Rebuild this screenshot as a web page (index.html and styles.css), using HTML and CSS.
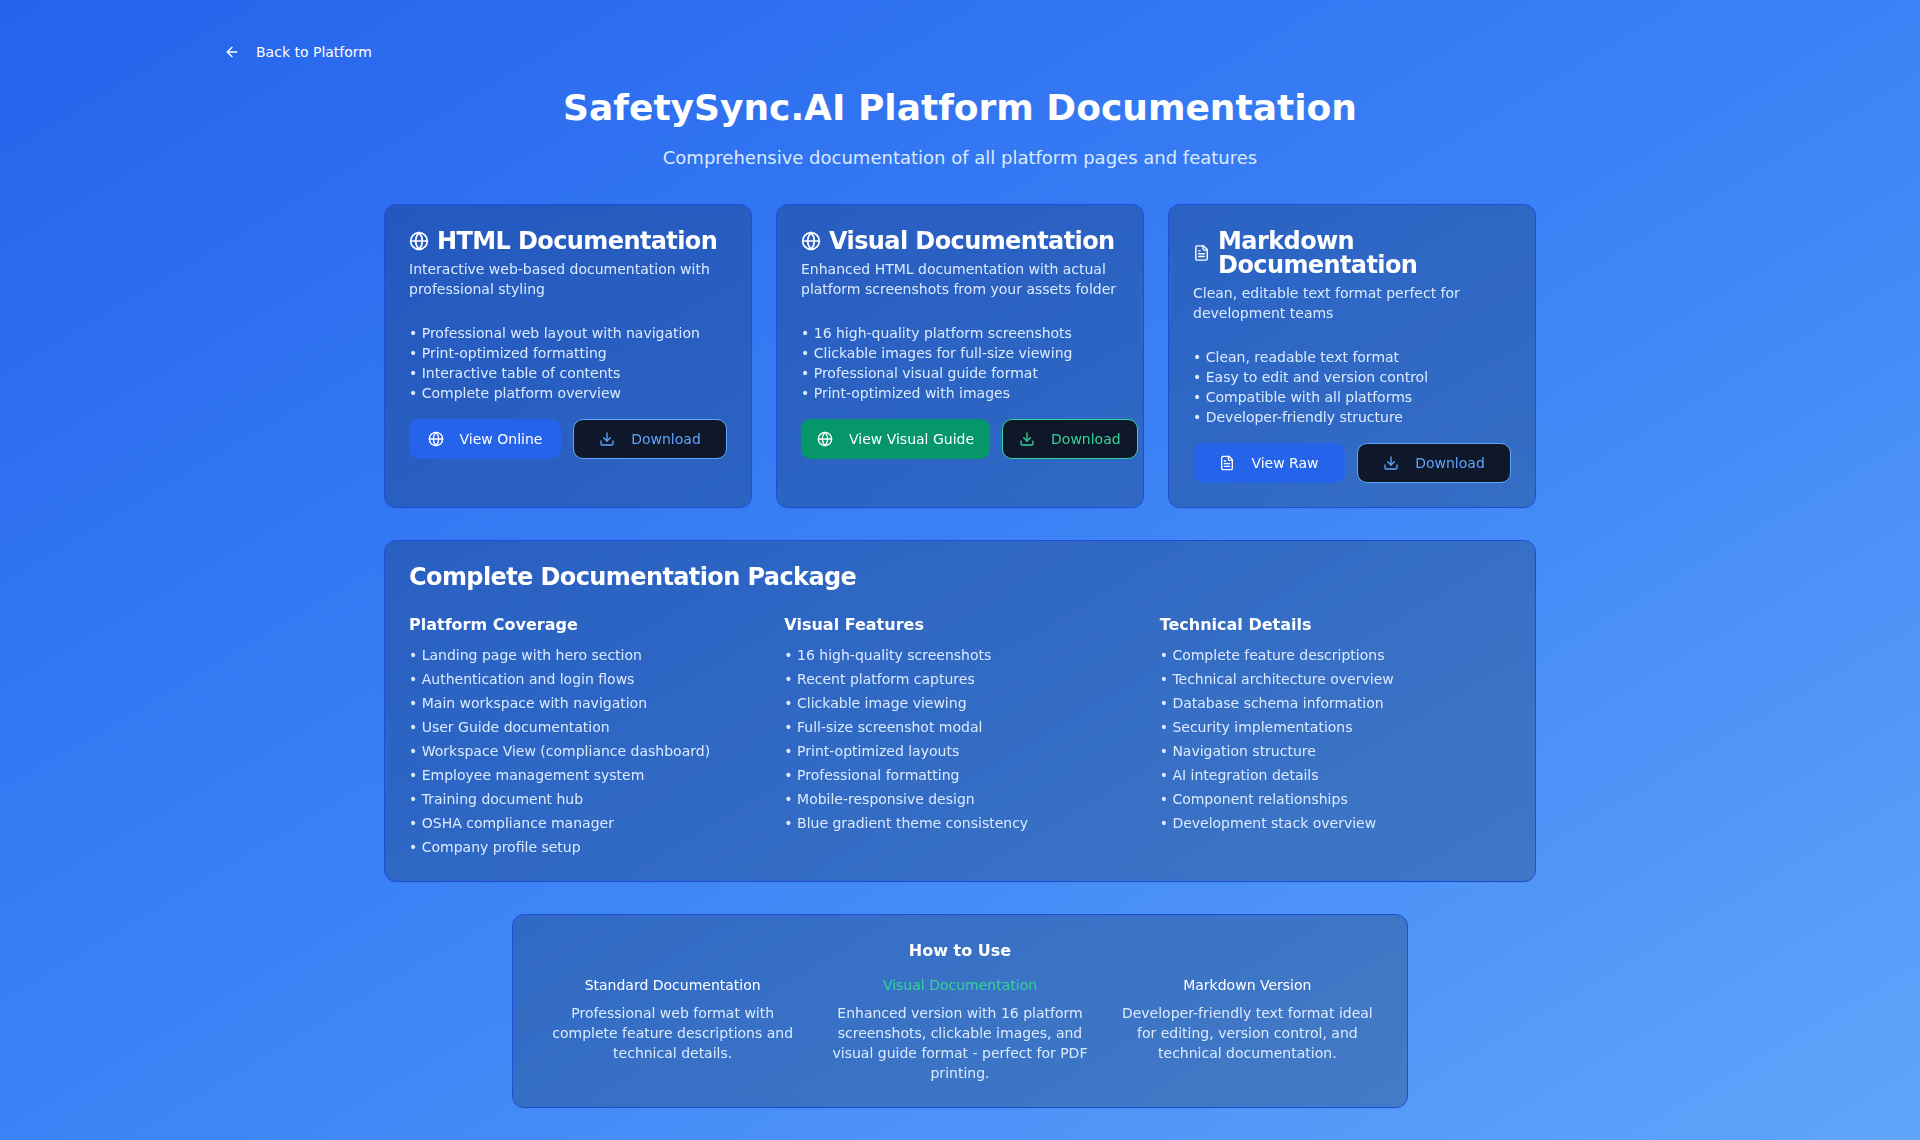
FILE: index.html
```html
<!DOCTYPE html>
<html lang="en">
<head>
<meta charset="utf-8">
<meta name="viewport" content="width=device-width, initial-scale=1">
<title>SafetySync.AI Platform Documentation</title>
<link rel="stylesheet" href="styles.css">
</head>
<body>
<svg class="sprite" aria-hidden="true">
  <symbol id="globe" viewBox="0 0 24 24"><circle cx="12" cy="12" r="10"/><path d="M12 2a14.5 14.5 0 0 0 0 20 14.5 14.5 0 0 0 0-20"/><path d="M2 12h20"/></symbol>
  <symbol id="download" viewBox="0 0 24 24"><path d="M21 15v4a2 2 0 0 1-2 2H5a2 2 0 0 1-2-2v-4"/><path d="m7 10 5 5 5-5"/><path d="M12 15V3"/></symbol>
  <symbol id="file-text" viewBox="0 0 24 24"><path d="M15 2H6a2 2 0 0 0-2 2v16a2 2 0 0 0 2 2h12a2 2 0 0 0 2-2V7Z"/><path d="M14 2v4a2 2 0 0 0 2 2h4"/><path d="M10 9H8"/><path d="M16 13H8"/><path d="M16 17H8"/></symbol>
  <symbol id="arrow-left" viewBox="0 0 24 24"><path d="m12 19-7-7 7-7"/><path d="M19 12H5"/></symbol>
</svg>
<main class="page">
  <nav class="back">
    <a class="btn btn-ghost" href="#"><svg class="icon" aria-hidden="true"><use href="#arrow-left"/></svg>Back to Platform</a>
  </nav>
  <header class="hero">
    <h1>SafetySync.AI Platform Documentation</h1>
    <p>Comprehensive documentation of all platform pages and features</p>
  </header>

  <section class="formats">
    <article class="card">
      <h2 class="card-title"><svg class="icon-lg" aria-hidden="true"><use href="#globe"/></svg>HTML Documentation</h2>
      <p class="card-text">Interactive web-based documentation with professional styling</p>
      <ul class="list">
        <li>Professional web layout with navigation</li>
        <li>Print-optimized formatting</li>
        <li>Interactive table of contents</li>
        <li>Complete platform overview</li>
      </ul>
      <div class="actions">
        <button class="btn btn-blue" type="button"><svg class="icon" aria-hidden="true"><use href="#globe"/></svg>View Online</button>
        <button class="btn btn-outline" type="button"><svg class="icon" aria-hidden="true"><use href="#download"/></svg>Download</button>
      </div>
    </article>
    <article class="card">
      <h2 class="card-title"><svg class="icon-lg" aria-hidden="true"><use href="#globe"/></svg>Visual Documentation</h2>
      <p class="card-text">Enhanced HTML documentation with actual platform screenshots from your assets folder</p>
      <ul class="list">
        <li>16 high-quality platform screenshots</li>
        <li>Clickable images for full-size viewing</li>
        <li>Professional visual guide format</li>
        <li>Print-optimized with images</li>
      </ul>
      <div class="actions">
        <button class="btn btn-green" type="button"><svg class="icon" aria-hidden="true"><use href="#globe"/></svg>View Visual Guide</button>
        <button class="btn btn-outline btn-outline-green" type="button"><svg class="icon" aria-hidden="true"><use href="#download"/></svg>Download</button>
      </div>
    </article>
    <article class="card">
      <h2 class="card-title"><svg class="icon-lg" aria-hidden="true"><use href="#file-text"/></svg>Markdown Documentation</h2>
      <p class="card-text">Clean, editable text format perfect for development teams</p>
      <ul class="list">
        <li>Clean, readable text format</li>
        <li>Easy to edit and version control</li>
        <li>Compatible with all platforms</li>
        <li>Developer-friendly structure</li>
      </ul>
      <div class="actions">
        <button class="btn btn-blue" type="button"><svg class="icon" aria-hidden="true"><use href="#file-text"/></svg>View Raw</button>
        <button class="btn btn-outline" type="button"><svg class="icon" aria-hidden="true"><use href="#download"/></svg>Download</button>
      </div>
    </article>
  </section>

  <section class="card package">
    <h2 class="card-title">Complete Documentation Package</h2>
    <div class="columns">
      <div>
        <h3>Platform Coverage</h3>
        <ul class="list list-spaced">
          <li>Landing page with hero section</li>
          <li>Authentication and login flows</li>
          <li>Main workspace with navigation</li>
          <li>User Guide documentation</li>
          <li>Workspace View (compliance dashboard)</li>
          <li>Employee management system</li>
          <li>Training document hub</li>
          <li>OSHA compliance manager</li>
          <li>Company profile setup</li>
        </ul>
      </div>
      <div>
        <h3>Visual Features</h3>
        <ul class="list list-spaced">
          <li>16 high-quality screenshots</li>
          <li>Recent platform captures</li>
          <li>Clickable image viewing</li>
          <li>Full-size screenshot modal</li>
          <li>Print-optimized layouts</li>
          <li>Professional formatting</li>
          <li>Mobile-responsive design</li>
          <li>Blue gradient theme consistency</li>
        </ul>
      </div>
      <div>
        <h3>Technical Details</h3>
        <ul class="list list-spaced">
          <li>Complete feature descriptions</li>
          <li>Technical architecture overview</li>
          <li>Database schema information</li>
          <li>Security implementations</li>
          <li>Navigation structure</li>
          <li>AI integration details</li>
          <li>Component relationships</li>
          <li>Development stack overview</li>
        </ul>
      </div>
    </div>
  </section>

  <section class="card usage">
    <h2>How to Use</h2>
    <div class="usage-columns">
      <div>
        <h3>Standard Documentation</h3>
        <p>Professional web format with complete feature descriptions and technical details.</p>
      </div>
      <div>
        <h3 class="highlight">Visual Documentation</h3>
        <p>Enhanced version with 16 platform screenshots, clickable images, and visual guide format - perfect for PDF printing.</p>
      </div>
      <div>
        <h3>Markdown Version</h3>
        <p>Developer-friendly text format ideal for editing, version control, and technical documentation.</p>
      </div>
    </div>
  </section>
</main>
</body>
</html>
```
FILE: styles.css
```css
*, *::before, *::after { box-sizing: border-box; }

body, h1, h2, h3, p, ul { margin: 0; padding: 0; }

body {
  min-height: 100vh;
  background: linear-gradient(to bottom right, #2563eb, #3b82f6, #60a5fa);
  color: #fff;
  font-family: "DejaVu Sans", sans-serif;
  font-size: 14px;
  line-height: 20px;
}

.sprite { display: none; }

.icon, .icon-lg {
  fill: none;
  stroke: currentColor;
  stroke-width: 2;
  stroke-linecap: round;
  stroke-linejoin: round;
}
.icon { width: 16px; height: 16px; flex-shrink: 0; }
.icon-lg { width: 20px; height: 20px; }

.page {
  max-width: 1536px;
  margin: 0 auto;
  padding: 32px 16px;
}

.back { display: flex; margin-bottom: 16px; }

.hero { margin-bottom: 32px; text-align: center; }
.hero h1 {
  margin-bottom: 16px;
  font-size: 36px;
  line-height: 40px;
}
.hero p {
  color: #dbeafe;
  font-size: 18px;
  line-height: 28px;
}

.btn {
  display: inline-flex;
  align-items: center;
  justify-content: center;
  gap: 16px;
  height: 40px;
  padding: 0 16px;
  border: 0;
  border-radius: 10px;
  color: #fff;
  font: inherit;
  text-decoration: none;
  white-space: nowrap;
  cursor: pointer;
}
.btn-blue { background: #2563eb; }
.btn-green { background: #059669; }
.btn-outline {
  border: 1px solid #60a5fa;
  background: #0f172a;
  color: #60a5fa;
}
.btn-outline-green { border-color: #34d399; color: #34d399; }

.card {
  padding: 24px;
  border: 1px solid #1d4ed8;
  border-radius: 12px;
  background: rgba(0, 0, 0, 0.2);
  box-shadow: 0 1px 2px rgba(0, 0, 0, 0.05);
  backdrop-filter: blur(4px);
}
.card-title {
  display: flex;
  align-items: center;
  gap: 8px;
  font-size: 24px;
  line-height: 24px;
  letter-spacing: -0.025em;
}
.card-text {
  margin: 6px 0 24px;
  color: #dbeafe;
}

.list { color: #dbeafe; list-style: none; }
.list li::before { content: "• "; }
.list-spaced { display: grid; gap: 4px; }

.actions { display: flex; gap: 12px; margin-top: 16px; }
.actions .btn { flex: 1; }

.formats {
  display: grid;
  grid-template-columns: repeat(3, minmax(0, 1fr));
  gap: 24px;
  max-width: 1152px;
  margin: 0 auto 32px;
}

.package { max-width: 1152px; margin: 0 auto 32px; }
.package .card-title { margin-bottom: 24px; }
.columns {
  display: grid;
  grid-template-columns: repeat(3, minmax(0, 1fr));
  gap: 24px;
}
.columns h3 {
  margin-bottom: 8px;
  font-size: 16px;
  line-height: 24px;
}

.usage { max-width: 896px; margin: 0 auto; text-align: center; }
.usage h2 {
  margin-bottom: 12px;
  font-size: 16px;
  line-height: 24px;
}
.usage-columns {
  display: grid;
  grid-template-columns: repeat(3, minmax(0, 1fr));
  gap: 16px;
}
.usage-columns h3 {
  margin-bottom: 8px;
  font-size: 14px;
  font-weight: 400;
}
.usage-columns p { color: #dbeafe; }
.usage-columns .highlight { color: #34d399; }

@media (max-width: 900px) {
  .formats, .columns, .usage-columns { grid-template-columns: minmax(0, 1fr); }
}
```
